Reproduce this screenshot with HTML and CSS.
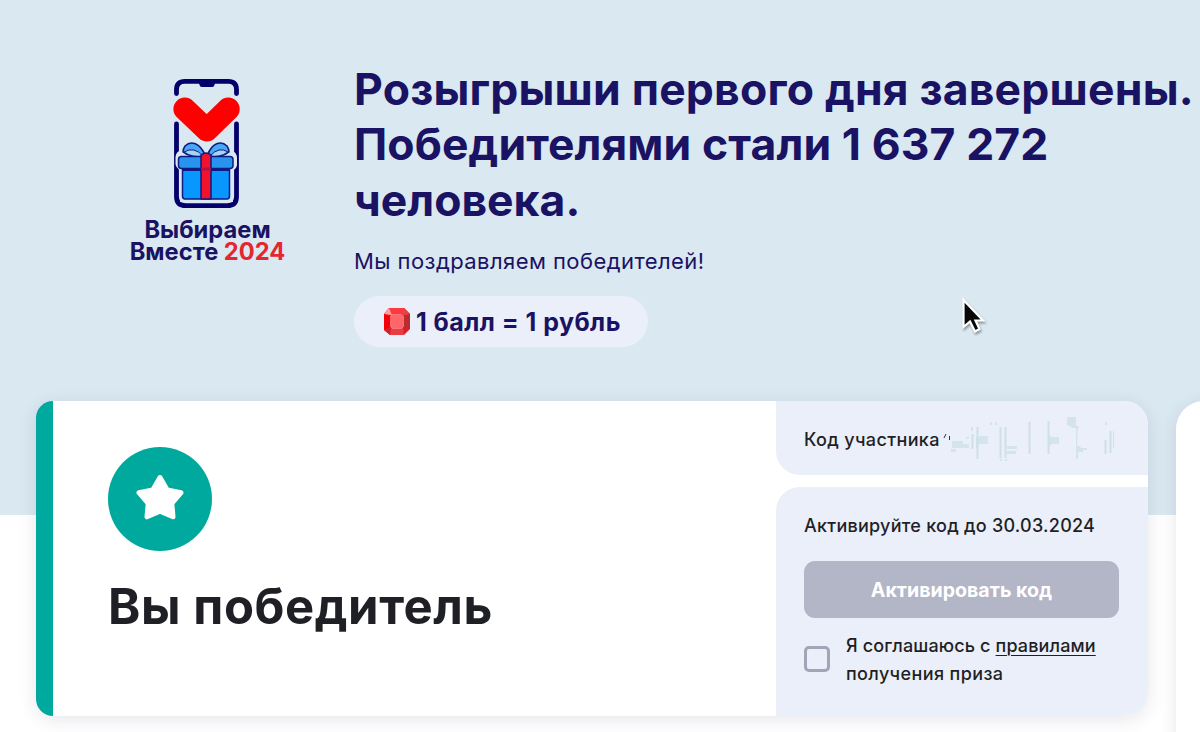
FILE: index.html
```html
<!DOCTYPE html>
<html lang="ru">
<head>
<meta charset="utf-8">
<title>Выбираем Вместе 2024</title>
<link rel="stylesheet" href="styles.css">
</head>
<body>
<div class="page">
  <header class="hero">
    <div class="logo">
      <svg class="logo-art" width="80" height="136" viewBox="0 0 80 136">
        <g fill="none" stroke="#04006b" stroke-width="4.8" stroke-linecap="round">
          <path d="M7.500 17.500V13.500Q7.500 5.300 15.700 5.300H59.300Q67.500 5.300 67.500 13.500V17.500"/>
          <path d="M7.500 48V120.500Q7.500 129.700 16.700 129.700H58.300Q67.500 129.700 67.500 120.500V48"/>
        </g>
        <path d="M29 5H47L45 10Q44.500 11 43 11H33Q31.500 11 31 10Z" fill="#04006b"/>
        <path d="M15.800 33L37.800 54L59.300 33" fill="none" stroke="#fe0000" stroke-width="22.800" stroke-linecap="round" stroke-linejoin="round"/>
        <path d="M13 76H62Q66 78 66 82V89Q65.500 92 62 93V124H13V93Q9 91 8.500 88V81Q9 77 13 76Z" fill="#dae8f1" stroke="#dae8f1" stroke-width="4"/>
        <g stroke="#101a83" stroke-width="1.500" stroke-linejoin="round">
          <path d="M13.500 92H60.500V120Q60.500 123 58 123H16Q13.500 123 13.500 120Z" fill="#0797ff"/>
          <path d="M36 79C31 67 22 64 16 70Q14 73 14 76Q20 81 34 81Z" fill="#49a7f4"/>
          <path d="M38.500 79C43 67 52 64 58 70Q60 73 60 76Q54 81 41 81Z" fill="#49a7f4"/>
          <path d="M15 76Q25 70 34 80Q24 82 15 76ZM59 76Q50 70 41 80Q50 82 59 76Z" fill="#a6d4f7" stroke-width="1"/>
          <rect x="9.500" y="80.500" width="54.500" height="12" rx="3" fill="#2894ee"/>
          <path d="M14 94H60" stroke-width="2"/>
          <path d="M32 79Q37 75 42 79V123H32Z" fill="#f3122b"/>
          <path d="M32 93H42" stroke="#ad144b" stroke-width="3"/>
        </g>
      </svg>
      <div class="logo-name"><div class="logo-a">Выбираем</div><div class="logo-b">Вместе <b>2024</b></div></div>
    </div>
    <div class="intro">
      <h1><span class="t1">Розыгрыши первого дня завершены.</span><br><span class="t2">Победителями стали 1 637 272</span><br><span class="t3">человека.</span></h1>
      <p class="congrats">Мы поздравляем победителей!</p>
      <div class="rate">
        <svg width="26" height="27" viewBox="0 0 26 27">
          <path d="M5 0H20L26 6V21L20 27H6L0 22V6Z" fill="#de1f27"/>
          <path d="M5 0H20L26 6L19 8H7L0 6Z" fill="#fb3a40"/>
          <path d="M0 6L5 0L8 7Z" fill="#ff9c9e"/>
          <path d="M20 0L26 6L18 8Z" fill="#e64248"/>
          <path d="M26 6V21L18 19V8Z" fill="#b92c2f"/>
          <path d="M0 6L7 8V19L0 22Z" fill="#f50008"/>
          <path d="M0 22L7 19L6 27Z" fill="#c9262b"/>
          <path d="M7 19H19L20 27H6Z" fill="#ea3d43"/>
          <path d="M8.500 6.500H17.500L19.500 8.500V18.500L17.500 20.500H8.500L6.500 18.500V8.500Z" fill="#ff6569" stroke="#ff9295" stroke-width=".6"/>
        </svg>
        <span class="rate-text">1 балл = 1 рубль</span>
      </div>
    </div>
  </header>
  <main class="cards">
    <section class="card">
      <div class="win">
        <div class="badge">
          <svg width="104" height="104" viewBox="0 0 104 104"><path d="M52 30.500L59.200 43L73 45.700L63.800 56.300L65 69.800L52 64.200L39 69.800L40.200 56.300L31 45.700L44.800 43Z" fill="#fff" stroke="#fff" stroke-width="5" stroke-linejoin="round"/></svg>
        </div>
        <h2><span class="win-text">Вы победитель</span></h2>
      </div>
      <div class="side">
        <div class="code"><span class="code-label">Код участника</span>
          <svg class="smudge" width="172" height="50" viewBox="0 0 172 50">
            <path d="M2 21L4 17M7.500 19V23" stroke="#34343c" stroke-width="1" fill="none"/>
            <g fill="#d3e4ec">
              <path d="M10 24H21V27H27V31H10ZM9 32H14V35H9ZM29 10H31V14H29ZM24 20H27V22H24ZM38 19H46V27H36V31H34V20H38ZM48 5H50V8H48ZM53 5H55V8H53ZM65 29H75V32H65ZM65 34H74V37H65ZM106 17L110 20H117V27H110L106 31ZM125 0H134V8L137 10V11H131L125 8ZM135 28L140 31H145V33H141V35H136V42H134V9H136ZM163 5H165V8H163Z"/>
              <path d="M58 42H60V44H58ZM63 42H65V44H63Z"/>
            </g>
            <path d="M30.500 17V32M35.500 10V42M58.500 10V41M63.500 10V41M87.500 5V37M106.500 4V37M163.500 23V37M168.500 14V36" stroke="#cddfe9" stroke-width="2"/>
            <path d="M171.500 14V31" stroke="#d4e1eb"/>
          </svg>
        </div>
        <div class="activate">
          <div class="until"><span>Активируйте код до 30.03.2024</span></div>
          <button class="btn" type="button"><span>Активировать код</span></button>
          <label class="agree"><i class="box"></i><span class="agree-text"><span class="g1">Я соглашаюсь с <u>правилами</u></span><br><span class="g2">получения приза</span></span></label>
        </div>
      </div>
    </section>
    <section class="card-next"></section>
  </main>
  <svg class="cursor" width="34" height="44" viewBox="0 0 34 44"><path d="M4.500 5V32L11 26.500L16 36.500L20.500 34L16.500 25.500H24Z" fill="#080808" stroke="#fff" stroke-width="2.200"/></svg>
</div>
</body>
</html>
```
FILE: styles.css
```css
* { box-sizing: border-box; }
body { margin: 0; font-family: Inter, "Noto Sans", sans-serif; color: #1f1f26; background: #fff; }
.page { position: relative; width: 1200px; height: 732px; overflow: hidden; background: linear-gradient(#dae8f1 515px, #fff 515px); }
h1, h2, p { margin: 0; }
span { white-space: nowrap; }
.hero { display: flex; height: 401px; color: #1a1262; }
.logo { width: 354px; padding: 76px 0 0 129px; }
.logo-art { display: block; margin-left: 40px; }
.logo-name { width: 157px; margin-top: 7px; font-size: 23.7px; line-height: 22px; font-weight: 700; text-align: center; white-space: nowrap; }
.logo-name b { color: #e5252f; font-weight: 700; }
.intro { padding-top: 62px; }
h1 { font-size: 44.5px; line-height: 55.3px; font-weight: 700; }
.t1 { letter-spacing: .2px; }
.t2 { letter-spacing: .1px; }
.congrats { margin-top: 17px; font-size: 22px; line-height: 33px; letter-spacing: .44px; }
.rate { display: flex; align-items: center; gap: 6px; width: 294px; height: 51px; margin-top: 18px; padding-left: 30px; border-radius: 26px; background: #ebeff9; font-size: 25px; font-weight: 700; letter-spacing: .45px; }
.rate-text { padding-top: 2px; }
.cards { display: flex; gap: 28px; padding-left: 36px; }
.card { display: flex; flex: none; width: 1112px; height: 315px; border-radius: 17px 24px 24px 17px; border-left: 17px solid #00a99d; background: #fff; box-shadow: 0 4px 18px rgba(40, 40, 90, .11); }
.win { width: 723px; padding: 46px 0 0 55px; }
.badge { width: 104px; height: 104px; border-radius: 50%; background: #00a99d; }
h2 { margin-top: 26px; font-size: 49px; line-height: 60px; font-weight: 700; letter-spacing: .58px; }
.side { display: flex; flex-direction: column; gap: 12px; width: 372px; font-size: 18px; font-weight: 500; }
.code { display: flex; height: 74px; padding-left: 28px; align-items: center; background: #ebeff9; border-radius: 0 24px 0 24px; }
.code-label { padding-top: 2px; letter-spacing: .37px; }
.smudge { margin: 8px 34px 0 auto; }
.activate { height: 229px; padding: 25px 28px 0; background: #ebeff9; border-radius: 24px 0 24px 0; }
.until { height: 49px; line-height: 28px; letter-spacing: .25px; }
.btn { display: block; width: 315px; height: 57px; border: 0; border-radius: 11px; padding: 0; background: #b3b6c7; color: #fff; font: 700 19.6px Inter, sans-serif; }
.agree { display: flex; align-items: center; gap: 16px; margin-top: 14px; line-height: 28px; }
.g1 { letter-spacing: .13px; }
.g2 { letter-spacing: .38px; }
.box { width: 26px; height: 26px; border: 3px solid #a1a5b8; border-radius: 5px; margin-top: -3px; }
u { text-decoration-thickness: 1px; text-underline-offset: 3px; }
.card-next { flex: none; width: 200px; height: 400px; border-radius: 28px; background: #fff; box-shadow: 0 4px 18px rgba(40, 40, 90, .11); }
.cursor { position: absolute; left: 959px; top: 295px; filter: drop-shadow(1px 2px 1px rgba(0, 0, 0, .35)); }
```
